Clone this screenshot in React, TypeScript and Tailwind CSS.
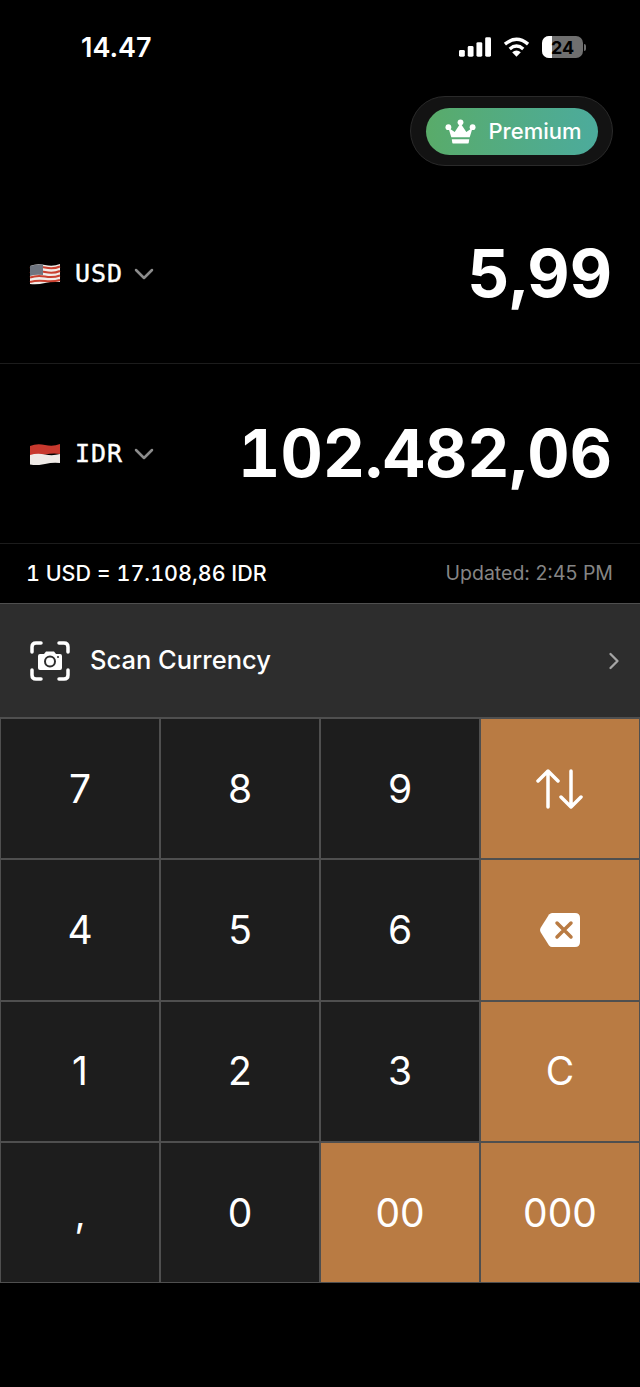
import React from "react";
import { ChevronRight } from "lucide-react";

function Crown() {
  return (
    <svg width="31" height="25" viewBox="0 0 32 25" fill="#fff">
      <circle cx="3.500" cy="8" r="3" />
      <circle cx="16" cy="3" r="3" />
      <circle cx="28.500" cy="8" r="3" />
      <path d="M3.500 8.500 L10 13 L16 4 L22 13 L28.500 8.500 L25.500 18.500 H6.500 Z" />
      <path d="M7 20.500 H25 L24.500 24 Q24.300 25 23 25 H9 Q7.700 25 7.500 24 Z" />
    </svg>
  );
}

function UsFlag() {
  return (
    <svg width="32" height="22" viewBox="0 0 32 22">
      <path d="M1 3 Q8 0 16 2 T31 1 V19 Q24 18 16 20 T1 21 Z" fill="#f1ece8" />
      <path d="M1 5.500 Q8 2.500 16 4.500 T31 3.500 M1 10 Q8 7 16 9 T31 8 M1 14.500 Q8 12 16 13.500 T31 12.500 M1 19 Q8 17 16 18 T31 17" stroke="#c9402f" strokeWidth="2" fill="none" />
      <path d="M1 3 Q6 1 14 1.500 V12 Q6 11 1 13 Z" fill="#6f7580" />
    </svg>
  );
}

function IdFlag() {
  return (
    <svg width="32" height="22" viewBox="0 0 32 22">
      <path d="M1 3 Q8 0 16 2 T31 1 V11 Q24 10 16 11.500 T1 12 Z" fill="#c8392e" />
      <path d="M1 12 Q8 10 16 11.500 T31 11 V20 Q24 19 16 21 T1 21.500 Z" fill="#efeae6" />
    </svg>
  );
}

function ScanIcon() {
  return (
    <svg width="40" height="40" viewBox="0 0 40 40" fill="none">
      <path d="M2 11 V6 Q2 2 6 2 H11 M29 2 H34 Q38 2 38 6 V11 M38 29 V34 Q38 38 34 38 H29 M11 38 H6 Q2 38 2 34 V29" stroke="#fff" strokeWidth="3.500" strokeLinecap="round" />
      <path d="M10 13 H14 L16 10.500 H24 L26 13 H30 Q32 13 32 15 V27 Q32 29 30 29 H10 Q8 29 8 27 V15 Q8 13 10 13 Z" fill="#fff" />
      <circle cx="20" cy="20.500" r="5" fill="none" stroke="#2d2d2d" strokeWidth="2" />
      <circle cx="28" cy="16" r="1" fill="#2d2d2d" />
    </svg>
  );
}

function SwapIcon() {
  return (
    <svg width="48" height="40" viewBox="0 0 48 40" fill="none" stroke="#fff" strokeWidth="3.500" strokeLinecap="round" strokeLinejoin="round">
      <path d="M12 38 V2 M2 12 L12 2 L22 12" />
      <path d="M35 2 V38 M25 28 L35 38 L45 28" />
    </svg>
  );
}

function BackspaceIcon({ color }: { color: string }) {
  return (
    <svg width="42" height="36" viewBox="0 0 42 36">
      <path d="M13 1 H36 Q41 1 41 6 V30 Q41 35 36 35 H13 Q11.500 35 10 33.500 L1.500 20 Q0.500 18 1.500 16 L10 2.500 Q11.500 1 13 1 Z" fill="#fff" />
      <path d="M18 11 L32 25 M32 11 L18 25" stroke={color} strokeWidth="3.500" strokeLinecap="round" />
    </svg>
  );
}

function CurrencyRow({ flag, code, value }: { flag: React.ReactNode; code: string; value: string }) {
  return (
    <div className="h-[180px] flex items-center justify-between pl-[29px] pr-[28px] border-b border-[#1c1c1c]">
      <div className="flex items-center">
        {flag}
        <span className="ml-[14px] text-[25px] text-white font-['DejaVu_Sans_Mono',monospace] tracking-[1px] [-webkit-text-stroke:0.4px_white]">{code}</span>
        <svg className="ml-[11px]" width="20" height="12" viewBox="0 0 20 12" fill="none" stroke="#8c8c8c" strokeWidth="2.500" strokeLinecap="round" strokeLinejoin="round">
          <path d="M2 2 L10 10 L18 2" />
        </svg>
      </div>
      <span className="text-[65.500px] font-bold text-white leading-none tabular-nums">{value}</span>
    </div>
  );
}

function Key({ children, accent }: { children: React.ReactNode; accent?: boolean }) {
  return (
    <button className={`h-[141.250px] pt-[1px] flex items-center justify-center border-[1px] border-[#4f4f4f] text-[39px] text-white ${accent ? "bg-[#b97b43]" : "bg-[#1d1d1d]"}`}>
      {children}
    </button>
  );
}

export default function App() {
  return (
    <div className="min-h-[1387px] bg-black font-['Inter',sans-serif]">
      {/* Status bar */}
      <div className="h-[96px] flex items-start justify-between pl-[81px] pr-[54px] pt-[32px]">
        <span className="text-[27px] leading-[32px] font-semibold text-white">14.47</span>
        <div className="flex items-center gap-[12px] pt-[4px]">
          <svg width="32" height="20" viewBox="0 0 33 20" fill="#fff">
            <rect x="0" y="13" width="6" height="7" rx="1.500" />
            <rect x="9" y="9" width="6" height="11" rx="1.500" />
            <rect x="18" y="5" width="6" height="15" rx="1.500" />
            <rect x="27" y="0" width="6" height="20" rx="1.500" />
          </svg>
          <svg width="27" height="20" viewBox="0 0 28 20" fill="none" stroke="#fff" strokeWidth="3.500">
            <path d="M2 7 Q14 -3 26 7" />
            <path d="M7 12 Q14 6 21 12" />
            <path d="M14 20 L9.500 15.500 Q14 12 18.500 15.500 Z" fill="#fff" stroke="none" />
          </svg>
          <div className="flex items-center">
            <div className="relative w-[41px] h-[22px] rounded-[7px] overflow-hidden bg-[#6f6f6f] flex items-center justify-center">
              <div className="absolute left-0 top-0 bottom-0 w-[10px] bg-white" />
              <span className="relative text-[18px] font-bold text-black">24</span>
            </div>
            <div className="ml-[1px] w-[2px] h-[7px] rounded-r bg-[#6f6f6f]" />
          </div>
        </div>
      </div>

      {/* Premium */}
      <div className="h-[88px] flex justify-end items-start pr-[27px]">
        <div className="w-[203px] h-[70px] rounded-[35px] bg-[#131313] border border-[#2a2a2a] flex items-center justify-center">
          <div className="w-[172px] h-[47px] rounded-[24px] bg-gradient-to-r from-[#59ab69] to-[#4cab9c] flex items-center justify-center gap-[13px] pl-[3px]">
            <Crown />
            <span className="text-[22px] font-medium text-white">Premium</span>
          </div>
        </div>
      </div>

      <CurrencyRow flag={<UsFlag />} code="USD" value="5,99" />
      <CurrencyRow flag={<IdFlag />} code="IDR" value="102.482,06" />

      {/* Rate */}
      <div className="h-[59px] flex items-center justify-between pl-[26px] pr-[27px]">
        <span className="text-[21.500px] font-medium text-white tabular-nums">1 USD = 17.108,86 IDR</span>
        <span className="text-[19.500px] text-[#858585]">Updated: 2:45 PM</span>
      </div>

      {/* Scan */}
      <div className="h-[115px] bg-[#2d2d2d] border-y border-[#4f4f4f] flex items-center justify-between pl-[30px] pr-[12px]">
        <div className="flex items-center gap-[20px]">
          <ScanIcon />
          <span className="text-[25.500px] font-medium text-white">Scan Currency</span>
        </div>
        <ChevronRight className="text-[#a5a5a5]" size={28} />
      </div>

      {/* Keypad */}
      <div className="grid grid-cols-4">
        <Key>7</Key>
        <Key>8</Key>
        <Key>9</Key>
        <Key accent><SwapIcon /></Key>
        <Key>4</Key>
        <Key>5</Key>
        <Key>6</Key>
        <Key accent><BackspaceIcon color="#b97b43" /></Key>
        <Key>1</Key>
        <Key>2</Key>
        <Key>3</Key>
        <Key accent>C</Key>
        <Key>,</Key>
        <Key>0</Key>
        <Key accent>00</Key>
        <Key accent>000</Key>
      </div>
    </div>
  );
}
